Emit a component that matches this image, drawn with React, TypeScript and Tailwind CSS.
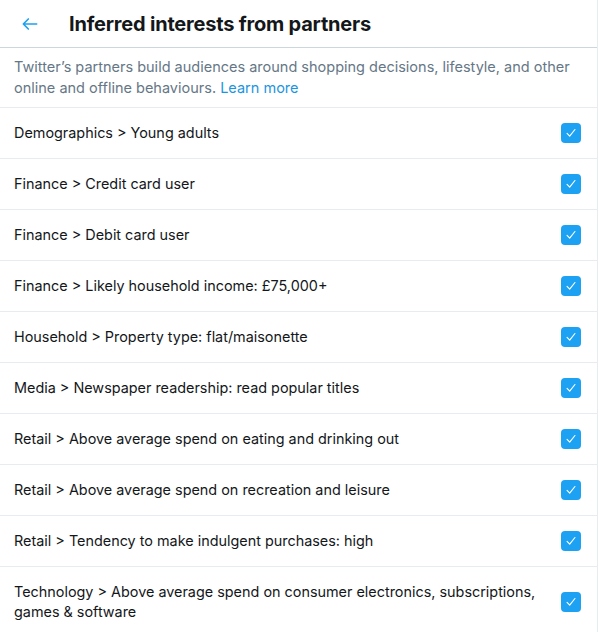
const ITEMS = [
  "Demographics > Young adults",
  "Finance > Credit card user",
  "Finance > Debit card user",
  "Finance > Likely household income: £75,000+",
  "Household > Property type: flat/maisonette",
  "Media > Newspaper readership: read popular titles",
  "Retail > Above average spend on eating and drinking out",
  "Retail > Above average spend on recreation and leisure",
  "Retail > Tendency to make indulgent purchases: high",
  "Technology > Above average spend on consumer electronics, subscriptions, games & software",
];

function CheckBox() {
  return (
    <span className="flex h-[20px] w-[20px] shrink-0 items-center justify-center rounded-[4px] bg-[#1da1f2]">
      <svg viewBox="0 0 16 16" className="h-[14px] w-[14px]" fill="none" stroke="white" strokeWidth="1.3" strokeLinecap="round" strokeLinejoin="round">
        <path d="M3.5 8.5l3 3 6-7.5" />
      </svg>
    </span>
  );
}

export default function App() {
  return (
    <div className="min-h-[632px] w-[598px] border-r border-[#e6ecf0] bg-white font-['Inter','Helvetica',sans-serif] text-[#14171a]">
      {/* Header */}
      <div className="flex h-[48px] items-center border-b border-[#ccd6dd]">
        <button className="ml-[20px] flex h-[20px] w-[20px] items-center justify-center text-[#1da1f2]" aria-label="Back">
          <svg viewBox="0 0 24 24" className="h-[20px] w-[20px]" fill="none" stroke="currentColor" strokeWidth="2" strokeLinecap="round" strokeLinejoin="round">
            <path d="M20 12H4M10 6l-6 6 6 6" />
          </svg>
        </button>
        <h1 className="ml-[29px] text-[20px] font-bold tracking-[-0.2px]">Inferred interests from partners</h1>
      </div>

      {/* Intro */}
      <p className="border-b border-[#e6ecf0] px-[14px] pt-[8px] pb-[9px] text-[14.5px] leading-[21px] text-[#657786]">
        Twitter’s partners build audiences around shopping decisions, lifestyle, and other online and offline behaviours.{" "}
        <a href="#" className="text-[#1b95e0]">Learn more</a>
      </p>

      {/* Rows */}
      {ITEMS.map((item) => (
        <div key={item} className="flex items-center justify-between gap-2 border-b border-[#e6ecf0] py-[15px] pr-[16px] pl-[14px] last:border-b-0">
          <span className="text-[14.4px] leading-[20px]">{item}</span>
          <CheckBox />
        </div>
      ))}
    </div>
  );
}
